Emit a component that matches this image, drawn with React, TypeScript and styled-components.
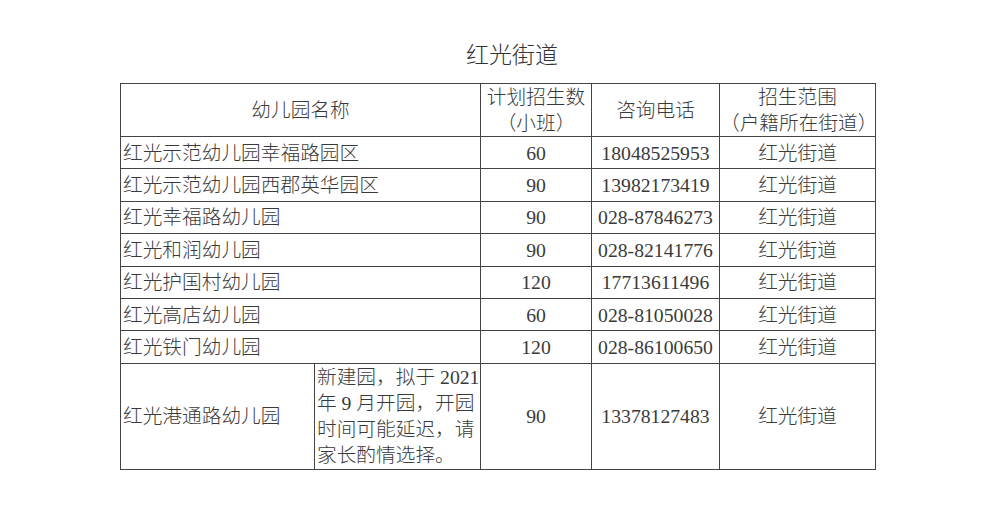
import React from 'react';
import styled, { createGlobalStyle } from 'styled-components';

const GlobalStyle = createGlobalStyle`
  html, body {
    margin: 0;
    padding: 0;
    background: #ffffff;
  }
  body {
    font-family: "Liberation Serif", "Noto Sans CJK SC", serif;
  }
`;

const Page = styled.div`
  width: 984px;
  height: 517px;
  padding-top: 41px;
  box-sizing: border-box;
  color: #3a3a3a;
`;

const Title = styled.div`
  padding-left: 40px;
  text-align: center;
  font-size: 23px;
  line-height: 30px;
  font-weight: 300;
  color: #333;
`;

const Table = styled.table`
  margin: 12px 0 0 120px;
  width: 755px;
  border-collapse: collapse;
  table-layout: fixed;
  font-size: 19.7px;
  font-weight: 300;
`;

const Row = styled.tr<{ $h: number }>`
  height: ${(p) => p.$h}px;
`;

const Cell = styled.td<{ $left?: boolean }>`
  border: 1px solid #444;
  padding: 0 0 0 ${(p) => (p.$left ? '2px' : '0')};
  text-align: ${(p) => (p.$left ? 'left' : 'center')};
  vertical-align: middle;
  white-space: nowrap;
  line-height: 26px;
`;

const Note = styled.div`
  line-height: 26px;
  text-align: left;
`;

const rows = [
  { name: '红光示范幼儿园幸福路园区', num: '60', tel: '18048525953' },
  { name: '红光示范幼儿园西郡英华园区', num: '90', tel: '13982173419' },
  { name: '红光幸福路幼儿园', num: '90', tel: '028-87846273' },
  { name: '红光和润幼儿园', num: '90', tel: '028-82141776' },
  { name: '红光护国村幼儿园', num: '120', tel: '17713611496' },
  { name: '红光高店幼儿园', num: '60', tel: '028-81050028' },
  { name: '红光铁门幼儿园', num: '120', tel: '028-86100650' },
];

const area = '红光街道';

export default function App() {
  return (
    <Page>
      <GlobalStyle />
      <Title>红光街道</Title>
      <Table>
        <colgroup>
          <col style={{ width: 194 }} />
          <col style={{ width: 166 }} />
          <col style={{ width: 111 }} />
          <col style={{ width: 128 }} />
          <col style={{ width: 156 }} />
        </colgroup>
        <tbody>
          <Row $h={53}>
            <Cell colSpan={2}>幼儿园名称</Cell>
            <Cell>
              计划招生数
              <br />
              （小班）
            </Cell>
            <Cell>咨询电话</Cell>
            <Cell>
              招生范围
              <br />
              （户籍所在街道）
            </Cell>
          </Row>
          {rows.map((r) => (
            <Row $h={32.4} key={r.name}>
              <Cell colSpan={2} $left>
                {r.name}
              </Cell>
              <Cell>{r.num}</Cell>
              <Cell>{r.tel}</Cell>
              <Cell>{area}</Cell>
            </Row>
          ))}
          <Row $h={106}>
            <Cell $left>红光港通路幼儿园</Cell>
            <Cell $left>
              <Note>
                新建园，拟于 2021
                <br />
                年 9 月开园，开园
                <br />
                时间可能延迟，请
                <br />
                家长酌情选择。
              </Note>
            </Cell>
            <Cell>90</Cell>
            <Cell>13378127483</Cell>
            <Cell>{area}</Cell>
          </Row>
        </tbody>
      </Table>
    </Page>
  );
}
